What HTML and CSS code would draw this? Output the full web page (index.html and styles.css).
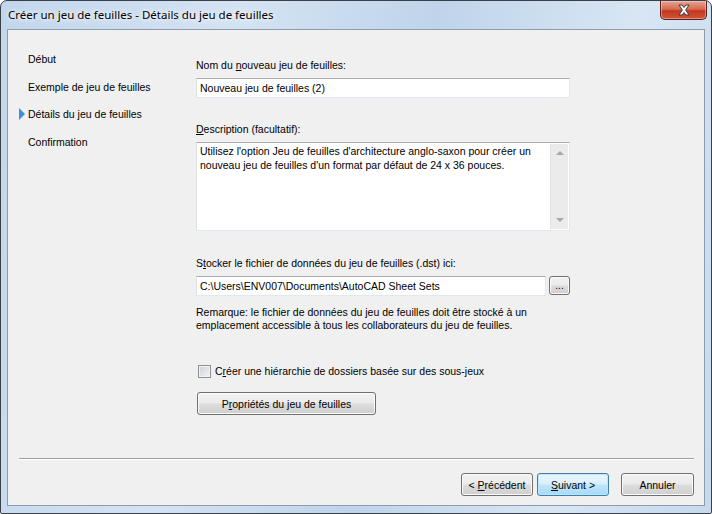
FILE: index.html
```html
<!DOCTYPE html>
<html lang="fr">
<head>
    <meta charset="UTF-8">
    <title>Créer un jeu de feuilles - Détails du jeu de feuilles</title>
    <link rel="stylesheet" href="styles.css">
</head>
<body>
    <div class="window">
        <div class="titlebar">
            <span class="title">Créer un jeu de feuilles - Détails du jeu de feuilles</span>
            <div class="close-btn">
                <svg width="16" height="12" viewBox="0 0 16 12">
                    <path d="M3 1h3l2 2.5L10 1h3l-3.3 5 3.3 5h-3L8 8.5 6 11H3l3.3-5z" fill="#fff" stroke="#3b3b3b" stroke-width="1"/>
                </svg>
            </div>
        </div>
        <div class="client">
            <div class="main">
                <ul class="steps">
                    <li>Début</li>
                    <li>Exemple de jeu de feuilles</li>
                    <li class="current">Détails du jeu de feuilles</li>
                    <li>Confirmation</li>
                </ul>
                <div class="form">
                    <div class="label">Nom du <u>n</u>ouveau jeu de feuilles:</div>
                    <div class="field name-field">Nouveau jeu de feuilles (2)</div>

                    <div class="label desc-label"><u>D</u>escription (facultatif):</div>
                    <div class="field textarea">
                        <div class="textarea-text">Utilisez l'option Jeu de feuilles d'architecture anglo-saxon pour créer un nouveau jeu de feuilles d'un format par défaut de 24 x 36 pouces.</div>
                        <div class="scrollbar">
                            <span class="arrow-up"></span>
                            <span class="arrow-down"></span>
                        </div>
                    </div>

                    <div class="label store-label">S<u>t</u>ocker le fichier de données du jeu de feuilles (.dst) ici:</div>
                    <div class="path-row">
                        <div class="field path-field">C:\Users\ENV007\Documents\AutoCAD Sheet Sets</div>
                        <button class="btn browse">...</button>
                    </div>
                    <p class="remark">Remarque: le fichier de données du jeu de feuilles doit être stocké à un<br>emplacement accessible à tous les collaborateurs du jeu de feuilles.</p>

                    <label class="check-row">
                        <span class="checkbox"></span>
                        <span>C<u>r</u>éer une hiérarchie de dossiers basée sur des sous-jeux</span>
                    </label>
                    <button class="btn props">P<u>r</u>opriétés du jeu de feuilles</button>
                </div>
            </div>
            <div class="separator"></div>
            <div class="footer">
                <button class="btn nav-btn">&lt; <u>P</u>récédent</button>
                <button class="btn nav-btn default"><u>S</u>uivant &gt;</button>
                <button class="btn nav-btn cancel">Annuler</button>
            </div>
        </div>
    </div>
</body>
</html>
```

FILE: styles.css
```css
body {
    margin: 0;
    font-family: "Liberation Sans", Arial, sans-serif;
    font-size: 10.5px;
    color: #000;
    background: #fff;
}
.window {
    width: 712px;
    height: 514px;
    box-sizing: border-box;
    border: 1px solid #3a3f48;
    border-radius: 7px 7px 2px 2px;
    background: linear-gradient(100deg, #c2d6ec 0%, #d4e3f3 30%, #bfd4ea 55%, #d8e6f4 80%, #c6d9ee 100%);
    padding: 0 6px 7px 6px;
    display: flex;
    flex-direction: column;
}
.titlebar {
    height: 28px;
    display: flex;
    align-items: flex-start;
    justify-content: space-between;
}
.title {
    font-family: "Noto Sans", "Open Sans", sans-serif;
    font-size: 11.5px;
    color: #000;
    padding: 6px 0 0 1px;
    text-shadow: 0 0 8px #fff, 0 0 4px #fff;
}
.close-btn {
    width: 45px;
    height: 18px;
    margin-right: -2px;
    border: 1px solid #5a2020;
    border-top: none;
    border-radius: 0 0 5px 5px;
    background: linear-gradient(#e8a493 0%, #d86a52 45%, #c2381c 55%, #d0563a 100%);
    display: flex;
    align-items: center;
    justify-content: center;
    box-shadow: inset 0 0 0 1px rgba(255, 255, 255, 0.35);
}
.client {
    flex: 1;
    border: 1px solid #8e9cae;
    background: #f0f0f0;
    display: flex;
    flex-direction: column;
}
.main {
    flex: 1;
    display: flex;
}
.steps {
    list-style: none;
    margin: 0;
    padding: 15px 0 0 20px;
    width: 168px;
}
.steps li {
    height: 27.7px;
    line-height: 28px;
    position: relative;
}
.steps li.current::before {
    content: "";
    position: absolute;
    left: -9px;
    top: 8px;
    border-left: 6px solid #3b8ee6;
    border-top: 6px solid transparent;
    border-bottom: 6px solid transparent;
}
.form {
    width: 374px;
    padding-top: 29px;
    display: flex;
    flex-direction: column;
    align-items: flex-start;
}
.label {
    line-height: 13px;
}
.field {
    box-sizing: border-box;
    background: #fff;
    border: 1px solid #e2e8ef;
    border-top-color: #abadb3;
    border-left-color: #dbdfe6;
    padding: 0 3px;
    line-height: 18px;
    white-space: nowrap;
}
.name-field {
    width: 374px;
    height: 20px;
    margin-top: 6px;
}
.desc-label {
    margin-top: 25px;
}
.textarea {
    width: 374px;
    height: 89px;
    margin-top: 6px;
    display: flex;
    padding: 0 0 0 3px;
    white-space: normal;
}
.textarea-text {
    flex: 1;
    line-height: 14px;
    padding-top: 1px;
}
.scrollbar {
    width: 17px;
    margin: 1px 1px 1px 0;
    background: #ebebeb;
    border-left: 1px solid #e4e4e4;
    position: relative;
}
.arrow-up, .arrow-down {
    position: absolute;
    left: 5px;
    border-left: 4px solid transparent;
    border-right: 4px solid transparent;
}
.arrow-up {
    top: 7px;
    border-bottom: 4px solid #a8a8a8;
}
.arrow-down {
    bottom: 7px;
    border-top: 4px solid #a8a8a8;
}
.store-label {
    margin-top: 26px;
}
.path-row {
    display: flex;
    gap: 3px;
    margin-top: 6px;
}
.path-field {
    width: 350px;
    height: 20px;
}
.btn {
    font-family: "Liberation Sans", Arial, sans-serif;
    font-size: 10.5px;
    color: #000;
    border: 1px solid #707070;
    border-radius: 3px;
    background: linear-gradient(#f2f2f2 0%, #ebebeb 48%, #dddddd 52%, #cfcfcf 100%);
    box-shadow: inset 0 0 0 1px #fbfbfb;
    padding: 0;
    cursor: default;
}
.browse {
    width: 21px;
    height: 19px;
    line-height: 15px;
    font-size: 10px;
}
.remark {
    margin: 10px 0 0 0;
    line-height: 13px;
    white-space: nowrap;
}
.check-row {
    display: flex;
    align-items: center;
    gap: 4px;
    margin-top: 33px;
    margin-left: 2px;
    line-height: 13px;
}
.checkbox {
    width: 11px;
    height: 11px;
    border: 1px solid #8e8f8f;
    background: linear-gradient(135deg, #cbcfd5, #f5f5f5);
    box-shadow: inset 0 0 0 1px #f4f4f4;
}
.props {
    margin-top: 14px;
    margin-left: 1px;
    width: 179px;
    height: 23px;
}
.separator {
    margin: 0 10px 0 11px;
    height: 1px;
    background: #a0a0a0;
    border-bottom: 1px solid #fff;
}
.footer {
    height: 45px;
    display: flex;
    justify-content: flex-end;
    align-items: flex-start;
    padding: 13px 10px 0 0;
    box-sizing: border-box;
}
.nav-btn {
    width: 72px;
    height: 23px;
}
.nav-btn.default {
    margin-left: 4px;
    border-color: #3c7fb1;
    box-shadow: inset 0 0 0 1px #bde6fd;
    background: linear-gradient(#eaf6fd 0%, #d9f0fc 48%, #bee6fd 52%, #a7d9f5 100%);
}
.nav-btn.cancel {
    width: 73px;
    margin-left: 12px;
}
```
